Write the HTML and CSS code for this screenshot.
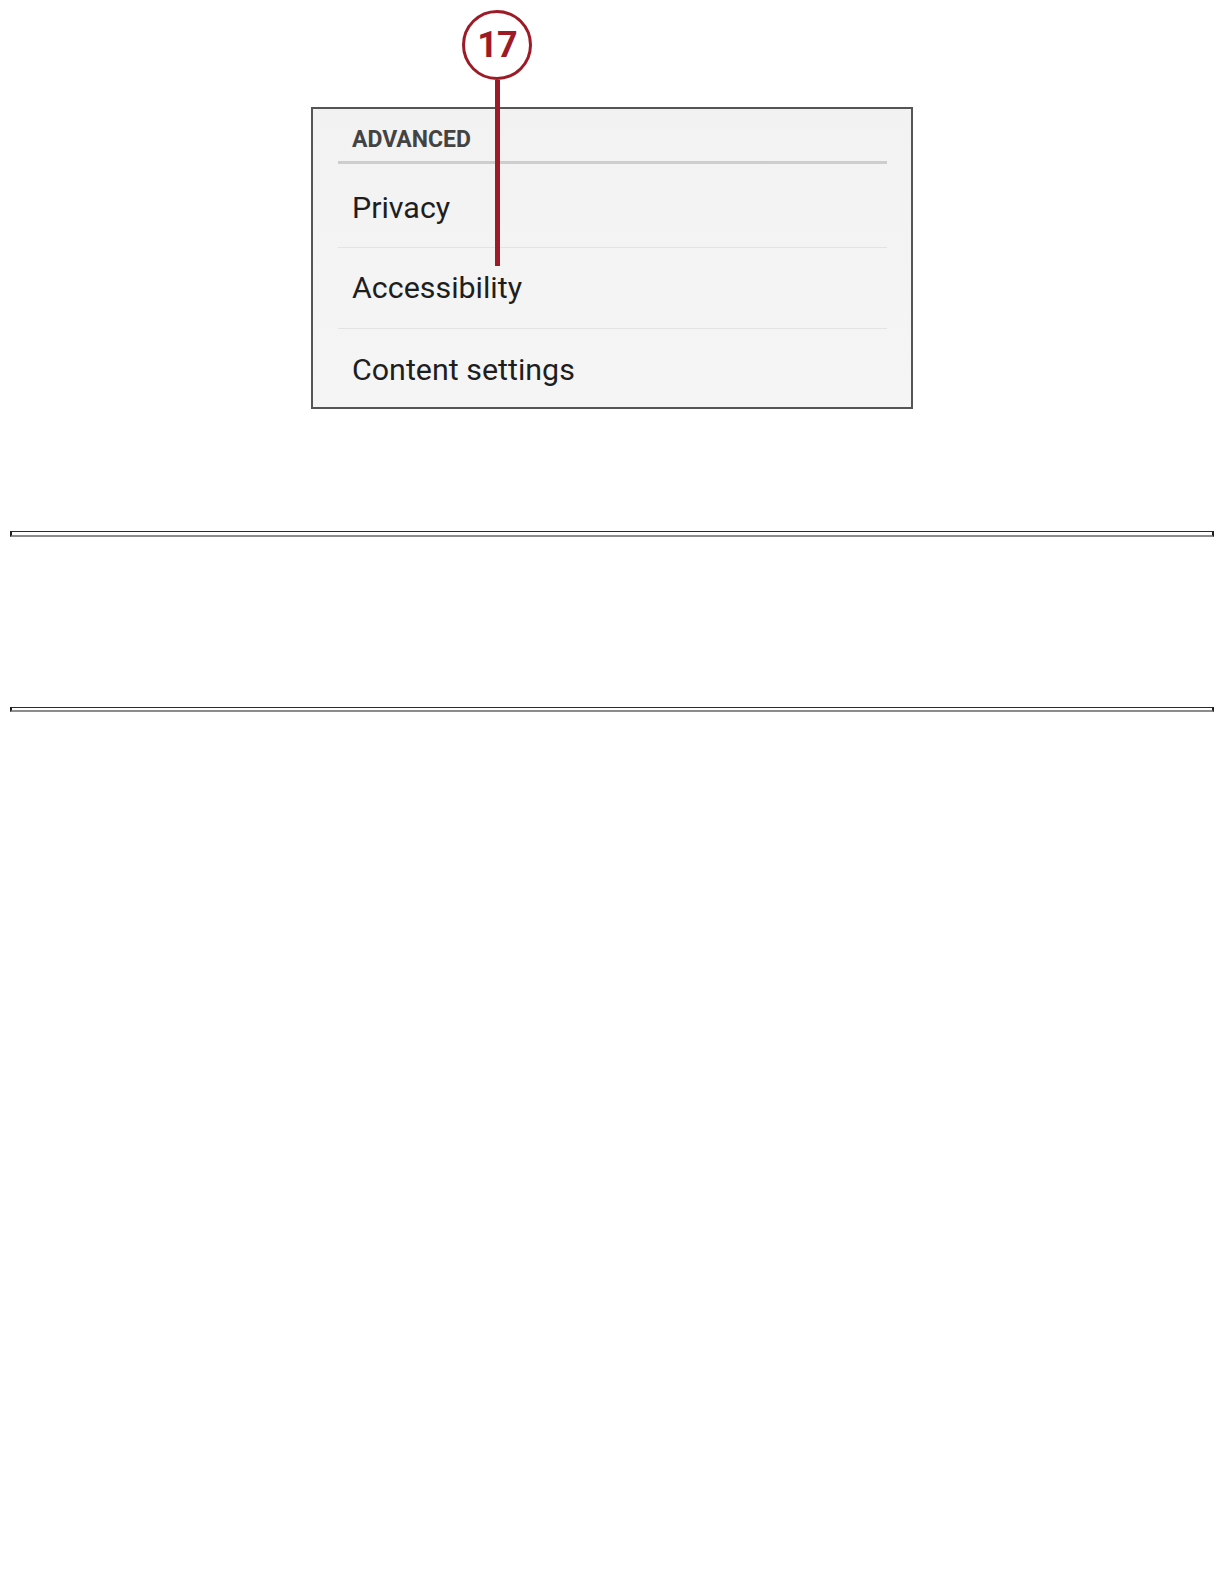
FILE: index.html
```html
<!DOCTYPE html>
<html lang="en">
<head>
    <meta charset="UTF-8">
    <meta name="viewport" content="width=device-width, initial-scale=1.0">
    <title>Advanced settings</title>
    <link rel="stylesheet" href="styles.css">
</head>
<body>
    <div class="figure">
        <!-- Callout marker -->
        <div class="callout">
            <div class="callout-circle">17</div>
            <div class="callout-line"></div>
        </div>

        <div class="screen">
            <div class="section-title">ADVANCED</div>
            <ul class="settings-list">
                <li class="first">Privacy</li>
                <li>Accessibility</li>
                <li class="last">Content settings</li>
            </ul>
        </div>
    </div>

    <div class="rule rule-top"></div>
    <div class="rule rule-bottom"></div>
</body>
</html>
```

FILE: styles.css
```css
body {
    margin: 0;
    background-color: #ffffff;
    font-family: Roboto, "Liberation Sans", sans-serif;
}

.figure {
    position: relative;
    width: 602px;
    margin: 0 auto;
    padding-top: 107px;
}

.screen {
    border: 2px solid #555555;
    background: linear-gradient(to bottom, #f2f2f2, #f5f5f5);
}

.section-title {
    margin: 0 24px 0 25px;
    padding: 18px 0 8px 14px;
    font-size: 23px;
    line-height: 26px;
    font-weight: bold;
    color: #434343;
    border-bottom: 3px solid #cdcdcd;
}

.settings-list {
    list-style: none;
    margin: 0 24px 0 25px;
    padding: 0;
}

.settings-list li {
    padding: 22px 0 22px 14px;
    font-size: 30.4px;
    line-height: 36px;
    color: #1e1e1e;
    border-bottom: 1px solid #e3e3e3;
}

.settings-list li.first {
    padding-top: 26px;
    padding-bottom: 21px;
}

.settings-list li.last {
    padding-top: 23px;
    padding-bottom: 19px;
    border-bottom: none;
}

.callout {
    position: absolute;
    top: 10px;
    left: 151px;
    width: 70px;
    z-index: 2;
}

.callout-circle {
    width: 64px;
    height: 64px;
    border: 3px solid #9c1b26;
    border-radius: 50%;
    background-color: #ffffff;
    color: #9c1b26;
    font-size: 36px;
    font-weight: bold;
    line-height: 64px;
    text-align: center;
    letter-spacing: -1px;
}

.callout-line {
    width: 5px;
    height: 186px;
    margin-left: 33px;
    background-color: #9c1b26;
}

.rule {
    margin: 0 10px;
    border-top: 1px solid #2b2b2b;
    border-left: 2px solid #1f1f1f;
    border-right: 2px solid #1f1f1f;
    border-bottom: 2px solid #8c8c8c;
}

.rule-top {
    margin-top: 122px;
    height: 3px;
}

.rule-bottom {
    margin-top: 170px;
    height: 2px;
}
```
